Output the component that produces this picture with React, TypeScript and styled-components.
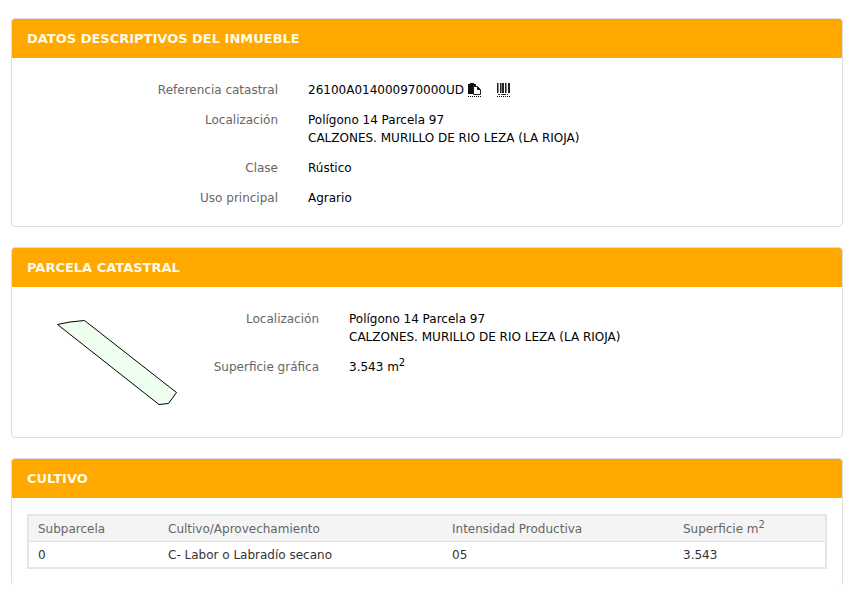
import React from "react";
import styled, { createGlobalStyle } from "styled-components";

const Global = createGlobalStyle`
  * { box-sizing: border-box; }
  body {
    margin: 0;
    background: #fff;
    color: #000;
    font: 12px/18px Verdana, "DejaVu Sans", sans-serif;
  }
`;

const Page = styled.main`
  display: flex;
  flex-direction: column;
  gap: 20px;
  padding: 18px 22px 16px 11px;
`;

const Panel = styled.section<{ $open?: boolean }>`
  border: 1px solid #ddd;
  border-bottom-width: ${(p) => (p.$open ? "0" : "1px")};
  border-radius: 4px;
  background: #fff;
`;

const PanelTitle = styled.h2`
  margin: 0;
  padding: 11px 15px 10px;
  border-radius: 3px 3px 0 0;
  background: #ffa800;
  color: #fffbe8;
  font: bold 13px/18px Verdana, "DejaVu Sans", sans-serif;
`;

const PanelBody = styled.div`
  display: flex;
  align-items: flex-start;
  padding: 23px 15px 19px;
`;

const TableBody = styled.div`
  padding: 16px 15px;
`;

const Fields = styled.dl<{ $label: number }>`
  display: grid;
  flex: 1;
  grid-template-columns: ${(p) => p.$label}px 1fr;
  column-gap: 30px;
  row-gap: 12px;
  margin: 0;
`;

const Label = styled.dt`
  color: #666;
  text-align: right;
`;

const Value = styled.dd`
  display: flex;
  flex-direction: column;
  margin: 0;
`;

const Reference = styled.span`
  display: flex;
  align-items: center;
  height: 18px;
`;

const IconButton = styled.button<{ $gap: number }>`
  display: flex;
  margin: 0 0 0 ${(p) => p.$gap}px;
  padding: 0 0 1px;
  border: 0;
  border-bottom: 1px dotted #000;
  background: none;
  cursor: pointer;
`;

const ParcelMap = styled.svg`
  flex: none;
  width: 150px;
  height: 108px;
`;

const Sup = styled.sup`
  font-size: 10px;
  line-height: 0;
`;

const CropTable = styled.table`
  width: 100%;
  table-layout: fixed;
  border: 2px solid #e5e5e5;
  border-spacing: 0;
  color: #333;
`;

const Column = styled.col<{ $width?: number }>`
  width: ${(p) => (p.$width ? `${p.$width}px` : "auto")};
`;

const HeadCell = styled.th`
  padding: 4px 9px 3px;
  border-bottom: 1px solid #ddd;
  background: #f4f4f4;
  color: #666;
  font-weight: normal;
  text-align: left;
`;

const Cell = styled.td`
  padding: 4px 9px 3px;
`;

function CopyIcon() {
  return (
    <svg width="13" height="12" viewBox="0 0 13 12" aria-hidden="true">
      <path d="M0 1h2V0h4v1h2v3H5v7H0z" fill="#111" />
      <path d="M5.5 3.5h4l3 3v5h-7z" fill="#fff" stroke="#222" />
      <path d="M9 3l4 4H9z" fill="#222" />
    </svg>
  );
}

function BarcodeIcon() {
  return (
    <svg width="13" height="12" viewBox="0 0 13 12" shapeRendering="crispEdges" aria-hidden="true">
      <path d="M0 0h1v10H0zM3 0h1v10H3zM5 0h2v10H5zM8 0h1v10H8zM11 0h2v10h-2z" fill="#222" />
      <path d="M1 0h1v10H1zM4 0h1v10H4zM9 0h1v10H9z" fill="#888" />
      <path d="M1 11h2v1H1zM4 11h5v1H4zM10 11h1v1h-1z" fill="#333" />
    </svg>
  );
}

function Location() {
  return (
    <>
      <Label>Localización</Label>
      <Value>
        <span>Polígono 14 Parcela 97</span>
        <span>CALZONES. MURILLO DE RIO LEZA (LA RIOJA)</span>
      </Value>
    </>
  );
}

export default function App() {
  return (
    <>
      <Global />
      <Page>
        <Panel>
          <PanelTitle>DATOS DESCRIPTIVOS DEL INMUEBLE</PanelTitle>
          <PanelBody>
            <Fields $label={251}>
              <Label>Referencia catastral</Label>
              <Value>
                <Reference>
                  26100A014000970000UD
                  <IconButton type="button" $gap={4} aria-label="Copiar referencia"><CopyIcon /></IconButton>
                  <IconButton type="button" $gap={16} aria-label="Código de barras"><BarcodeIcon /></IconButton>
                </Reference>
              </Value>
              <Location />
              <Label>Clase</Label>
              <Value>Rústico</Value>
              <Label>Uso principal</Label>
              <Value>Agrario</Value>
            </Fields>
          </PanelBody>
        </Panel>
        <Panel>
          <PanelTitle>PARCELA CATASTRAL</PanelTitle>
          <PanelBody>
            <ParcelMap viewBox="0 0 150 108" role="img" aria-label="Parcela">
              <path
                d="M30.5 14.5L43 12L57.5 10.5L149.5 82.5L141.5 93.5L132 94.5Z"
                fill="#efffef"
                stroke="#000"
                strokeLinejoin="round"
              />
            </ParcelMap>
            <Fields $label={142}>
              <Location />
              <Label>Superficie gráfica</Label>
              <Value><span>3.543 m<Sup>2</Sup></span></Value>
            </Fields>
          </PanelBody>
        </Panel>
        <Panel $open>
          <PanelTitle>CULTIVO</PanelTitle>
          <TableBody>
            <CropTable>
              <colgroup>
                <Column $width={130} />
                <Column $width={284} />
                <Column $width={231} />
                <Column />
              </colgroup>
              <thead>
                <tr>
                  <HeadCell scope="col">Subparcela</HeadCell>
                  <HeadCell scope="col">Cultivo/Aprovechamiento</HeadCell>
                  <HeadCell scope="col">Intensidad Productiva</HeadCell>
                  <HeadCell scope="col">Superficie m<Sup>2</Sup></HeadCell>
                </tr>
              </thead>
              <tbody>
                <tr>
                  <Cell>0</Cell>
                  <Cell>C- Labor o Labradío secano</Cell>
                  <Cell>05</Cell>
                  <Cell>3.543</Cell>
                </tr>
              </tbody>
            </CropTable>
          </TableBody>
        </Panel>
      </Page>
    </>
  );
}
